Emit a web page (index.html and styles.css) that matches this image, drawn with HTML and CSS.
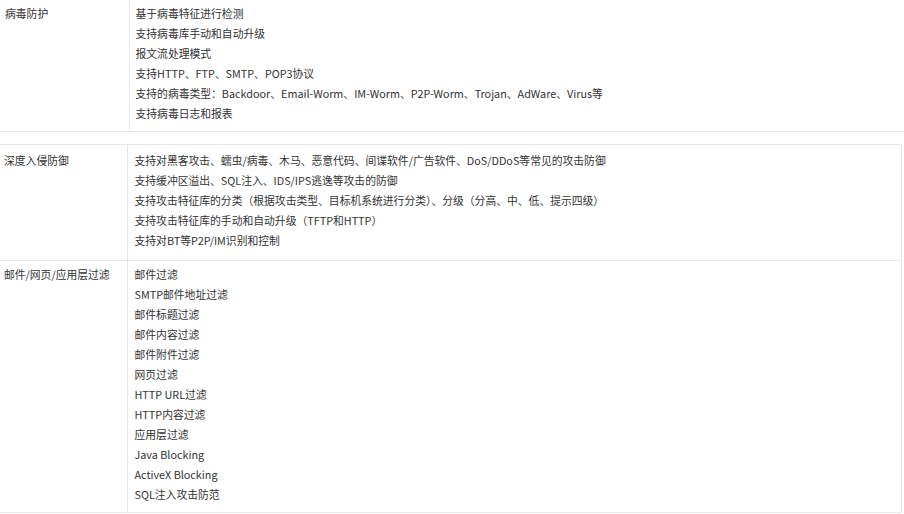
FILE: index.html
```html
<!DOCTYPE html>
<html lang="zh-CN">

<head>
    <meta charset="UTF-8">
    <meta name="viewport" content="width=device-width, initial-scale=1.0">
    <title>功能特性</title>
    <link rel="stylesheet" href="styles.css">
</head>

<body>
    <table class="spec-table spec-first">
        <colgroup>
            <col class="col-label">
            <col>
        </colgroup>
        <tr>
            <td class="label">病毒防护</td>
            <td class="items">
                <div>基于病毒特征进行检测</div>
                <div>支持病毒库手动和自动升级</div>
                <div>报文流处理模式</div>
                <div>支持HTTP、FTP、SMTP、POP3协议</div>
                <div>支持的病毒类型：Backdoor、Email-Worm、IM-Worm、P2P-Worm、Trojan、AdWare、Virus等</div>
                <div>支持病毒日志和报表</div>
            </td>
        </tr>
    </table>

    <table class="spec-table spec-second">
        <colgroup>
            <col class="col-label">
            <col>
        </colgroup>
        <tr class="row-ips">
            <td class="label">深度入侵防御</td>
            <td class="items">
                <div>支持对黑客攻击、蠕虫/病毒、木马、恶意代码、间谍软件/广告软件、DoS/DDoS等常见的攻击防御</div>
                <div>支持缓冲区溢出、SQL注入、IDS/IPS逃逸等攻击的防御</div>
                <div>支持攻击特征库的分类（根据攻击类型、目标机系统进行分类）、分级（分高、中、低、提示四级）</div>
                <div>支持攻击特征库的手动和自动升级（TFTP和HTTP）</div>
                <div>支持对BT等P2P/IM识别和控制</div>
            </td>
        </tr>
        <tr class="row-filter">
            <td class="label">邮件/网页/应用层过滤</td>
            <td class="items">
                <div>邮件过滤</div>
                <div>SMTP邮件地址过滤</div>
                <div>邮件标题过滤</div>
                <div>邮件内容过滤</div>
                <div>邮件附件过滤</div>
                <div>网页过滤</div>
                <div>HTTP URL过滤</div>
                <div>HTTP内容过滤</div>
                <div>应用层过滤</div>
                <div>Java Blocking</div>
                <div>ActiveX Blocking</div>
                <div>SQL注入攻击防范</div>
            </td>
        </tr>
    </table>
</body>

</html>
```

FILE: styles.css
```css
body {
    margin: 0;
    background-color: #fff;
    color: #333;
    font-family: "Noto Sans CJK SC", "Noto Sans", sans-serif;
    font-size: 10.8px;
    line-height: 20px;
}

.spec-table {
    border-collapse: collapse;
    table-layout: fixed;
}

.spec-table td {
    vertical-align: top;
    border: 1px solid #e8e8e8;
}

.spec-first {
    width: 903px;
}

.spec-first td {
    border-top: none;
}

.spec-first .col-label {
    width: 129px;
}

.spec-first td.label {
    border-left: none;
    padding: 3px 5px 8px;
}

.spec-first td.items {
    border-right: none;
    padding: 3px 6px 8px;
}

.spec-second {
    width: 902px;
    margin-top: 12px;
}

.spec-second .col-label {
    width: 127px;
}

.spec-second td.label {
    border-left: none;
    padding-left: 4px;
}

.spec-second td.items {
    padding-left: 7px;
}

.row-ips td {
    padding-top: 5px;
    padding-bottom: 10px;
}

.row-filter td {
    padding-top: 3px;
    padding-bottom: 8px;
}
```
